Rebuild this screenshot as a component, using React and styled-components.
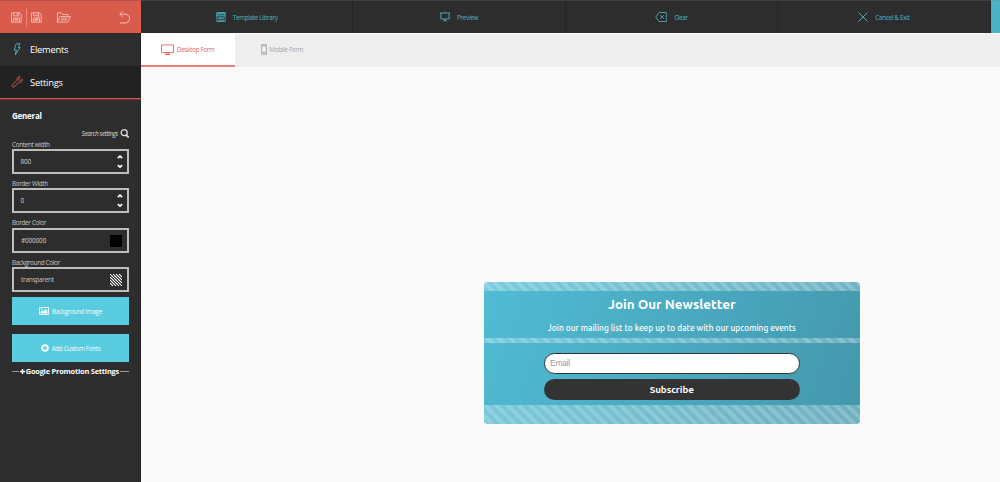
import React from 'react';
import styled, { createGlobalStyle, css } from 'styled-components';

const Global = createGlobalStyle`
  * { box-sizing: border-box; }
  body { margin: 0; background: #fafafa; overflow: hidden; font-family: "Open Sans", sans-serif; }
  svg { flex: none; }
`;
const Page = styled.div`display: flex; width: 1000px; height: 482px;`;
const Sidebar = styled.aside`
  width: 141px; height: 100%; flex: none; background: #2d2d2d; color: #fff;
  border-right: 1px solid #242424; display: flex; flex-direction: column;
`;
const FileBar = styled.div`
  height: 33px; margin-right: -1px; background: #d95b4c; border-top: 1px solid #b0564b;
  display: flex; align-items: center; padding: 0 11px; color: #f6c9c3; flex: none;
`;
const Separator = styled.i`width: 1px; height: 19px; background: #ee8377; margin: 0 4px;`;
const Spacer = styled.i`flex: 1;`;
const Gap = styled.i`width: ${p => p.$w}px;`;
const NavItem = styled.div`
  height: 33px; flex: none; display: flex; align-items: center;
  padding-left: 11px; gap: 7px; font-size: 9.4px; letter-spacing: -.25px;
  color: #fff; background: ${p => (p.$active ? '#222' : '#2d2d2d')};
  ${p => p.$active && css`border-bottom: 1px solid #cf5647; box-shadow: 0 1px 0 #6b3730; margin-right: -1px;`}
  svg { color: ${p => (p.$active ? '#d95b4c' : '#4bb5c9')}; }
`;
const Panel = styled.div`padding: 10px 11px 0 12px; display: flex; flex-direction: column;`;
const Heading = styled.h2`margin: 0; font-size: 8px; line-height: 13px; height: 14px; font-weight: 700; letter-spacing: -.25px;`;
const Search = styled.div`
  display: flex; justify-content: flex-end; align-items: center; gap: 2px; height: 10px; margin-top: 5px;
  font-size: 6.3px; font-style: italic; color: #ddd; letter-spacing: -.35px;
`;
const Label = styled.label`
  font-size: 6.3px; line-height: 8px; height: 8px; color: #c8c8c8; white-space: nowrap;
  margin-top: ${p => p.$mt}px; letter-spacing: -.3px;
`;
const Field = styled.div`
  height: 25px; margin-top: ${p => (p.$tight ? 0 : 1)}px; border: 2px solid #bdbdbd;
  display: flex; align-items: center; justify-content: space-between;
  padding: 0 ${p => (p.$num ? 4 : 5)}px 0 ${p => (p.$num ? 6.5 : 7)}px;
  font-size: 6.5px; color: #c4c4c4; letter-spacing: ${p => (p.$plain ? -0.28 : -0.1)}px;
  font-family: ${p => (p.$plain ? '"Open Sans"' : 'Roboto')}, sans-serif;
`;
const Swatch = styled.i`width: 12px; height: 12px; background: #000;`;
const Button = styled.button`
  height: 28px; margin: ${p => p.$mt}px 0 0; border: 0; background: #5accdf; color: #effcfe; padding: 0;
  font: 6.3px "Open Sans", sans-serif; display: flex; align-items: center; justify-content: center; gap: 3px;
  white-space: nowrap; letter-spacing: -.32px;
`;
const Divider = styled.div`
  display: flex; align-items: center; height: 12px; margin-top: 3px; gap: 1px; white-space: nowrap;
  font-size: 7.4px; letter-spacing: -.2px; font-weight: 700;
  &::before, &::after { content: ''; flex: 1; height: 1px; background: #999; }
  &::after { flex: none; width: 9px; }
`;
const Main = styled.main`flex: 1; min-width: 0; display: flex; flex-direction: column;`;
const TopBar = styled.nav`
  height: 33px; flex: none; background: #2d2d2d; border-top: 1px solid #3f3f3f; display: flex;
`;
const Action = styled.div`
  width: 212.4px; display: flex; align-items: center; justify-content: center; gap: 7px;
  border-right: 1px solid #252525; font-size: 6.3px; letter-spacing: -.3px; color: #4bb5c9; white-space: nowrap;
`;
const Edge = styled.div`flex: 1; background: #4bb1c5; margin-top: -1px; border-top: 1px solid #5aa3b2;`;
const Tabs = styled.div`height: 34px; flex: none; display: flex; background: #eee; border-top: 1px solid #fafafa;`;
const Tab = styled.div`
  width: 94px; display: flex; align-items: center; justify-content: center; gap: 2.5px; font-size: 6.3px; white-space: nowrap;
  letter-spacing: -.3px; color: ${p => (p.$active ? '#e0675b' : '#a5a5a5')}; padding-bottom: ${p => (p.$active ? 0 : 2)}px;
  ${p => p.$active && css`background: #fff; border-bottom: 2px solid #e9837a;`}
`;
const Canvas = styled.div`flex: 1; padding: 214.5px 0 0 343px;`;
const Card = styled.form`
  width: 375.5px; height: 142px; border-radius: 4px; overflow: hidden; margin: 0; color: #fff;
  background: linear-gradient(110deg, #50bcd4, #4497ac);
  display: flex; flex-direction: column; align-items: center;
`;
const Stripe = styled.div`
  width: 100%; height: ${p => p.$h}px; flex: none;
  background: repeating-linear-gradient(45deg, rgba(255,255,255,.24) 0 4px, rgba(255,255,255,.37) 4px 8px);
`;
const Title = styled.h1`margin: 4px 0 0; font: 700 13.4px/20px Ubuntu, "Noto Sans", sans-serif; height: 20px;`;
const Text = styled.p`
  margin: 7px 0 4px; font: 500 8.4px/12px Ubuntu, "Noto Sans", sans-serif; height: 12px; white-space: nowrap;
`;
const Email = styled.div`
  width: 256.5px; height: 21px; margin-top: 10px; border: 1.5px solid #333; border-radius: 11px; background: #fff;
  color: #999; font: 8.4px/19px "Liberation Sans", sans-serif; letter-spacing: -.2px; padding-left: 5.5px; flex: none;
`;
const Submit = styled.button`
  width: 256.5px; height: 21px; margin: 5px 0; border: 0; border-radius: 11px; background: #333; color: #fff;
  font: 700 9.8px/20px Ubuntu, "Noto Sans", sans-serif; letter-spacing: -.1px; padding: 1px 0 0; flex: none;
`;

const Svg = ({ w, h, sw = 1, children }) => (
  <svg width={w} height={h} viewBox={`0 0 ${w} ${h}`} fill="none" stroke="currentColor" strokeWidth={sw}>{children}</svg>
);
const Save = ({ edit }) => (
  <Svg w={11} h={11} sw={0.8}>
    <path d="M.5 .8h8.3l1.4 1.4v8H.5z M2.7 .8v3h5v-3 M6.2 1.3v1.6 M2.3 10.2V6h6.2v4.2 M3.5 7.4h3.8M3.5 8.8h3.8" />
    {edit && <path d="M3.5 9l5-5" />}
  </Svg>
);
const Folder = () => (
  <Svg w={15} h={11} sw={0.8}><path d="M1.4 10.2V.8h4l1 1.7h5.5v2 M1.4 10.2L4 4.5h10.4l-2.5 5.7z M5.3 6.2h6.4M4.5 8h6.4" /></Svg>
);
const Undo = () => (
  <Svg w={11} h={13} sw={0.9}><path d="M3.5 .5L.8 3.2l2.9 2.7M.8 3.2h5.4a4.3 4.3 0 0 1 0 8.8H1" /></Svg>
);
const Bolt = () => <Svg w={12} h={13} sw={0.9}><path d="M5.2 .8H9L7.2 4.5h2L4.2 12l1.2-5H3.2z" /></Svg>;
const Wrench = () => (
  <Svg w={12} h={12} sw={0.9}><path d="M11.3 3.2L9.7 4.5 8.1 4.2 7.8 2.7 9.3 1C7.4 .3 5.4 1.9 5.9 4.3L1.3 8.9c-1 1 .8 3 2 2L7.8 6.3c2.4.6 4.2-1.2 3.5-3.1zM2.4 9.8h.2" /></Svg>
);
const Magnifier = () => <Svg w={9} h={9} sw={1.3}><circle cx="4.2" cy="3.7" r="3" /><path d="M6.2 5.9l2.5 2.6" strokeWidth="1.8" /></Svg>;
const Arrows = () => <Svg w={6} h={15} sw={1.6}><path d="M.8 4.2L3 2.1l2.2 2.1M.8 11.1L3 13.2l2.2-2.1" stroke="#fff" /></Svg>;
const Hatch = () => (
  <Svg w={12} h={12} sw={1.1}>
    <path d="M0 0h12v12H0z" fill="#111" stroke="none" />
    <path stroke="#fff" d="M0 9l3 3M0 6l6 6M0 3l9 9M0 0l12 12M3 0l9 9M6 0l6 6M9 0l3 3" />
  </Svg>
);
const Picture = () => (
  <Svg w={10} h={8} sw={1}><path d="M.5 .5h9v7h-9z" /><path d="M1.5 6.5V5L3 3.6l1 1L6.5 2 8.5 4v2.5z" fill="currentColor" stroke="none" /><circle cx="2.8" cy="2.3" r=".8" fill="currentColor" stroke="none" /></Svg>
);
const PlusCircle = () => <Svg w={8} h={8} sw={1.3}><circle cx="4" cy="4" r="3.8" fill="currentColor" stroke="none" /><path d="M4 1.9v4.2M1.9 4h4.2" stroke="#5accdf" /></Svg>;
const Plus = () => <Svg w={5} h={5} sw={1.5}><path d="M2.5 0v5M0 2.5h5" /></Svg>;
const Template = () => (
  <Svg w={10} h={10} sw={0.8}><path d="M.9 .5h8.2l.4 3.4H.5z" fill="currentColor" fillOpacity=".35" /><path d="M.9 1.7h8.2M.9 3.9v5.6h8.2V3.9M2.8 5.5h1.7v1.4H2.8zM5.7 5.5h1.7v1.4H5.7zM2 8.3h6" /></Svg>
);
const Screen = () => <Svg w={10} h={10} sw={0.9}><path d="M0 1h10M.9 1v6h8.2V1M5 7v2M3.3 9.5L5 8l1.7 1.5M5 0v1" /></Svg>;
const Clear = () => <Svg w={12} h={10} sw={0.8}><path d="M.7 5L4 .5h7.3v9H4zM5.3 3.2l3.5 3.6M8.8 3.2L5.3 6.8" /></Svg>;
const Cross = () => <Svg w={10} h={10} sw={0.9}><path d="M.5 .5l9 9M9.5 .5l-9 9" /></Svg>;
const Monitor = () => <Svg w={13} h={11} sw={0.9}><path d="M.5 .9h12v7.6H.5zM5.5 8.5L5 10.2h3l-.5-1.7M3.7 10.3h5.6" /></Svg>;
const Phone = () => <Svg w={6} h={11} sw={0.9}><path d="M.6 .6h4.8v9.8H.6zM.6 2h4.8M.6 8.4h4.8M2.5 9.4h1" /></Svg>;

export default function App() {
  return (
    <Page>
      <Global />
      <Sidebar>
        <FileBar><Save /><Separator /><Save edit /><Gap $w={14} /><Folder /><Spacer /><Undo /></FileBar>
        <NavItem><Bolt />Elements</NavItem>
        <NavItem $active><Wrench />Settings</NavItem>
        <Panel>
          <Heading>General</Heading>
          <Search>Search settings <Magnifier /></Search>
          <Label $mt={3}>Content width</Label><Field $tight $num>800<Arrows /></Field>
          <Label $mt={6}>Border Width</Label><Field $tight $num>0<Arrows /></Field>
          <Label $mt={6}>Border Color</Label><Field>#000000<Swatch /></Field>
          <Label $mt={6}>Background Color</Label><Field $tight $plain>transparent<Hatch /></Field>
          <Button $mt={5}><Picture />Background Image</Button>
          <Button $mt={9}><PlusCircle />Add Custom Fonts</Button>
          <Divider><Plus />Google Promotion Settings</Divider>
        </Panel>
      </Sidebar>
      <Main>
        <TopBar>
          <Action><Template />Template Library</Action>
          <Action><Screen />Preview</Action>
          <Action><Clear />Clear</Action>
          <Action><Cross />Cancel &amp; Exit</Action>
          <Edge />
        </TopBar>
        <Tabs>
          <Tab $active><Monitor />Desktop Form</Tab>
          <Tab><Phone />Mobile Form</Tab>
        </Tabs>
        <Canvas>
          <Card>
            <Stripe $h={9} />
            <Title>Join Our Newsletter</Title>
            <Text>Join our mailing list to keep up to date with our upcoming events</Text>
            <Stripe $h={5} />
            <Email>Email</Email>
            <Submit type="button">Subscribe</Submit>
            <Stripe $h={19} />
          </Card>
        </Canvas>
      </Main>
    </Page>
  );
}
